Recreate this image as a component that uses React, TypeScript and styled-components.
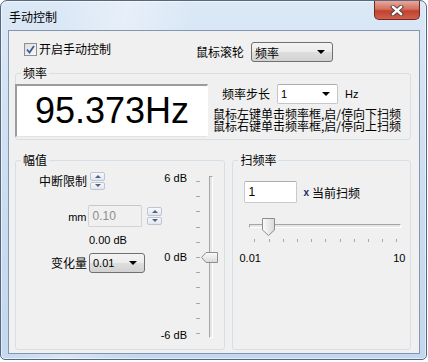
import React from "react";
import styled, { createGlobalStyle } from "styled-components";

const cjk = `"Noto Sans CJK SC", "Liberation Sans", sans-serif`;
const latin = `"Liberation Sans", Arial, sans-serif`;

const GlobalStyle = createGlobalStyle`
  html, body { margin: 0; padding: 0; background: #ffffff; }
  body { font-family: ${cjk}; font-size: 12px; color: #000; }
`;

const Window = styled.div`
  width: 427px;
  height: 360px;
  box-sizing: border-box;
  border: 1px solid #55687f;
  border-radius: 7px 7px 5px 5px;
  background: linear-gradient(100deg, rgba(255, 255, 255, 0) 12%, rgba(255, 255, 255, 0.35) 26%, rgba(255, 255, 255, 0) 40%),
    linear-gradient(180deg, #dbe8f6 0%, #cadcf0 60%, #c3d7ee 100%);
  box-shadow: inset 0 0 0 1px rgba(255, 255, 255, 0.55);
  display: flex;
  flex-direction: column;
`;

const TitleBar = styled.div`
  height: 29px;
  display: flex;
  align-items: flex-start;
  justify-content: space-between;
`;

const Title = styled.div`
  margin: 8px 0 0 8px;
  line-height: 16px;
`;

const CloseButton = styled.div`
  width: 46px;
  height: 19px;
  margin-right: 6px;
  box-sizing: border-box;
  border: 1px solid #6e2a22;
  border-top: none;
  border-radius: 0 0 5px 5px;
  background: linear-gradient(180deg, #e9a99b 0%, #d4705f 45%, #c2412f 55%, #d0604c 100%);
  display: flex;
  align-items: center;
  justify-content: center;
`;

const Client = styled.div`
  flex: 1;
  margin: 0 6px 5px 7px;
  border: 1px solid #8396ae;
  background: #f0f0f0;
  display: flex;
  flex-direction: column;
`;

const TopRow = styled.div`
  display: flex;
  align-items: flex-start;
  margin-top: 11px;
  padding-left: 15px;
  height: 20px;
`;

const CheckLabel = styled.label`
  display: flex;
  align-items: center;
  gap: 2px;
  width: 172px;
  height: 14px;
  line-height: 14px;
`;

const CheckBox = styled.span`
  width: 13px;
  height: 13px;
  box-sizing: border-box;
  border: 1px solid #8e8f8f;
  background: linear-gradient(135deg, #dcdcdc, #fbfbfb);
  display: flex;
  align-items: center;
  justify-content: center;
`;

const Label = styled.span<{ $width?: number }>`
  display: inline-block;
  line-height: 20px;
  white-space: nowrap;
  ${(p) => (p.$width ? `width: ${p.$width}px; text-align: right;` : "")}
`;

const Combo = styled.div<{ $width: number; $flat?: boolean }>`
  width: ${(p) => p.$width}px;
  height: 20px;
  box-sizing: border-box;
  border: 1px solid ${(p) => (p.$flat ? "#c3c6cc" : "#707070")};
  border-top-color: ${(p) => (p.$flat ? "#abadb3" : "#707070")};
  border-radius: ${(p) => (p.$flat ? "2px" : "3px")};
  background: ${(p) =>
    p.$flat ? "#ffffff" : "linear-gradient(180deg, #f4f4f4 0%, #ececec 48%, #dedede 52%, #d2d2d2 100%)"};
  display: flex;
  align-items: center;
  justify-content: space-between;
  padding: 0 7px 0 3px;
  font-family: ${(p) => (p.$latin ? latin : cjk)};
  font-size: ${(p) => (p.$latin ? "11px" : "12px")};
` as any;

const Arrow = styled.span`
  width: 0;
  height: 0;
  border-left: 4px solid transparent;
  border-right: 4px solid transparent;
  border-top: 4px solid #000;
`;

const Group = styled.fieldset<{ $width?: number; $height?: number }>`
  margin: 0;
  padding: 0;
  min-width: 0;
  border: 1px solid #d5dfe5;
  border-radius: 3px;
  box-sizing: border-box;
  ${(p) => (p.$width ? `width: ${p.$width}px;` : "")}
  ${(p) => (p.$height ? `height: ${p.$height}px;` : "")}
`;

const Legend = styled.legend`
  margin-left: 5px;
  padding: 0 2px;
  line-height: 16px;
`;

const FreqGroup = styled(Group)`
  margin: 3px 8px 0 6px;
`;

const FreqBody = styled.div`
  display: flex;
  padding: 3px 0 2px 0;
`;

const Display = styled.div`
  width: 193px;
  height: 53px;
  box-sizing: border-box;
  margin-left: -1px;
  border-style: solid;
  border-width: 2px 1px 1px 2px;
  border-color: #9c9c9c #ffffff #e3e3e3 #9c9c9c;
  background: #ffffff;
  display: flex;
  align-items: center;
  justify-content: center;
  font-family: ${latin};
  font-size: 36px;
`;

const FreqSide = styled.div`
  margin-left: 5px;
  display: flex;
  flex-direction: column;
`;

const StepRow = styled.div`
  display: flex;
  align-items: center;
  height: 20px;
  margin-left: 9px;
  gap: 7px;
`;

const Unit = styled.span`
  font-family: ${latin};
  font-size: 11px;
`;

const Hint = styled.div`
  margin-top: 4px;
  line-height: 12px;
  white-space: nowrap;
`;

const BottomRow = styled.div`
  display: flex;
  gap: 7px;
  margin: 12px 8px 0 6px;
`;

const AmpBody = styled.div`
  display: flex;
  align-items: flex-start;
`;

const Controls = styled.div`
  width: 146px;
  margin-top: 4px;
  display: flex;
  flex-direction: column;
`;

const CtrlRow = styled.div<{ $h: number; $gap?: number }>`
  display: flex;
  align-items: center;
  height: ${(p) => p.$h}px;
  margin-top: ${(p) => p.$gap || 0}px;
`;

const SmallText = styled.span<{ $ml?: number; $color?: string }>`
  font-family: ${latin};
  font-size: 11px;
  line-height: 14px;
  margin-left: ${(p) => p.$ml || 0}px;
  color: ${(p) => p.$color || "#000"};
`;

const Spin = styled.div<{ $ml: number }>`
  margin-left: ${(p) => p.$ml}px;
  width: 15px;
  height: 18px;
  display: flex;
  flex-direction: column;
  gap: 1px;
`;

const SpinHalf = styled.div`
  flex: 1;
  box-sizing: border-box;
  border: 1px solid #bcc5d1;
  border-radius: 2px;
  background: linear-gradient(180deg, #f8f9fb, #e2e6ec);
  display: flex;
  align-items: center;
  justify-content: center;
`;

const SpinArrow = styled.span<{ $down?: boolean }>`
  width: 0;
  height: 0;
  border-left: 3px solid transparent;
  border-right: 3px solid transparent;
  ${(p) => (p.$down ? "border-top: 3px solid #4e6287;" : "border-bottom: 3px solid #4e6287;")}
`;

const TextBox = styled.div<{ $width: number; $disabled?: boolean; $ml?: number }>`
  width: ${(p) => p.$width}px;
  height: 22px;
  box-sizing: border-box;
  margin-left: ${(p) => p.$ml || 0}px;
  border: 1px solid ${(p) => (p.$disabled ? "#d3d3d3" : "#c5c9d0")};
  border-top-color: ${(p) => (p.$disabled ? "#c8c8c8" : "#abadb3")};
  border-radius: 2px;
  background: ${(p) => (p.$disabled ? "#f0f0f0" : "#ffffff")};
  color: ${(p) => (p.$disabled ? "#8d8d8d" : "#000")};
  padding-left: 3px;
  display: flex;
  align-items: center;
  font-family: ${latin};
  font-size: 12px;
`;

const ScaleLabels = styled.div`
  width: 25px;
  height: 171px;
  margin-top: 3px;
  display: flex;
  flex-direction: column;
  justify-content: space-between;
  align-items: flex-end;
  font-family: ${latin};
  font-size: 11px;
  line-height: 14px;
  white-space: nowrap;
`;

const VTicks = styled.div`
  width: 4px;
  height: 153px;
  margin: 13px 0 0 9px;
  display: flex;
  flex-direction: column;
  justify-content: space-between;
`;

const VTick = styled.span`
  height: 1px;
  background: #a8a8a8;
`;

const VTrack = styled.div`
  position: relative;
  width: 4px;
  height: 162px;
  box-sizing: border-box;
  margin: 8px 0 0 9px;
  border-style: solid;
  border-width: 1px;
  border-color: #a5a5a5 #ffffff #ffffff #a5a5a5;
  background: #e6e6e6;
`;

const VThumb = styled.svg`
  position: absolute;
  right: -6px;
  top: 75px;
`;

const SweepBody = styled.div`
  display: flex;
  flex-direction: column;
`;

const SweepRow = styled.div`
  display: flex;
  align-items: center;
  margin: 13px 0 0 11px;
`;

const Times = styled.span`
  margin-left: 6px;
  margin-right: 3px;
  font-family: ${latin};
  font-size: 10px;
  font-weight: bold;
  color: #1d2b5e;
`;

const HSlider = styled.div`
  position: relative;
  width: 152px;
  margin: 15px 0 0 16px;
  padding-top: 6px;
`;

const HTrack = styled.div`
  height: 4px;
  box-sizing: border-box;
  border-style: solid;
  border-width: 1px;
  border-color: #a5a5a5 #ffffff #ffffff #a5a5a5;
  background: #e6e6e6;
`;

const HThumb = styled.svg`
  position: absolute;
  left: 13px;
  top: 0;
`;

const HTicks = styled.div`
  width: 143px;
  height: 3px;
  margin: 11px 0 0 21px;
  display: flex;
  justify-content: space-between;
`;

const HTick = styled.span`
  width: 1px;
  background: #a8a8a8;
`;

const RangeRow = styled.div`
  width: 166px;
  margin: 9px 0 0 6px;
  display: flex;
  justify-content: space-between;
  font-family: ${latin};
  font-size: 11px;
  line-height: 14px;
`;

const ticks = Array.from({ length: 11 }, (_, i) => i);

const SpinBox = ({ ml }: { ml: number }) => (
  <Spin $ml={ml}>
    <SpinHalf>
      <SpinArrow />
    </SpinHalf>
    <SpinHalf>
      <SpinArrow $down />
    </SpinHalf>
  </Spin>
);

const App: React.FC = () => {
  return (
    <>
      <GlobalStyle />
      <Window>
        <TitleBar>
          <Title>手动控制</Title>
          <CloseButton>
            <svg width="14" height="11" viewBox="0 0 14 11">
              <path d="M3 2 L11 9 M11 2 L3 9" stroke="#4b3a3a" strokeWidth="4.2" strokeLinecap="square" />
              <path d="M3 2 L11 9 M11 2 L3 9" stroke="#ffffff" strokeWidth="2.4" strokeLinecap="square" />
            </svg>
          </CloseButton>
        </TitleBar>
        <Client>
          <TopRow>
            <CheckLabel>
              <CheckBox>
                <svg width="9" height="9" viewBox="0 0 9 9">
                  <path d="M1 4.5 L3.5 7.5 L8 1" fill="none" stroke="#3d5a9e" strokeWidth="1.8" />
                </svg>
              </CheckBox>
              开启手动控制
            </CheckLabel>
            <Label style={{ marginRight: 7 }}>鼠标滚轮</Label>
            <Combo $width={82}>
              <span>频率</span>
              <Arrow />
            </Combo>
          </TopRow>

          <FreqGroup>
            <Legend>频率</Legend>
            <FreqBody>
              <Display>95.373Hz</Display>
              <FreqSide>
                <StepRow>
                  <Label>频率步长</Label>
                  <Combo $width={61} $flat $latin>
                    <span>1</span>
                    <Arrow />
                  </Combo>
                  <Unit>Hz</Unit>
                </StepRow>
                <Hint>
                  鼠标左键单击频率框,启/停向下扫频
                  <br />
                  鼠标右键单击频率框,启/停向上扫频
                </Hint>
              </FreqSide>
            </FreqBody>
          </FreqGroup>

          <BottomRow>
            <Group $width={211} $height={198}>
              <Legend>幅值</Legend>
              <AmpBody>
                <Controls>
                  <CtrlRow $h={18}>
                    <Label $width={71}>中断限制</Label>
                    <SpinBox ml={3} />
                  </CtrlRow>
                  <CtrlRow $h={22} $gap={15}>
                    <Label $width={71}>
                      <SmallText>mm</SmallText>
                    </Label>
                    <TextBox $width={54} $ml={2} $disabled>
                      0.10
                    </TextBox>
                    <SpinBox ml={5} />
                  </CtrlRow>
                  <CtrlRow $h={14} $gap={6}>
                    <SmallText $ml={73}>0.00 dB</SmallText>
                  </CtrlRow>
                  <CtrlRow $h={20} $gap={6}>
                    <Label $width={71}>变化量</Label>
                    <Combo $width={56} $latin style={{ marginLeft: 2 }}>
                      <span>0.01</span>
                      <Arrow />
                    </Combo>
                  </CtrlRow>
                </Controls>
                <ScaleLabels>
                  <span>6 dB</span>
                  <span>0 dB</span>
                  <span>-6 dB</span>
                </ScaleLabels>
                <VTicks>
                  {ticks.map((t) => (
                    <VTick key={t} />
                  ))}
                </VTicks>
                <VTrack>
                  <VThumb width="17" height="11" viewBox="0 0 17 11">
                    <defs>
                      <linearGradient id="vthumb" x1="0" y1="0" x2="0" y2="1">
                        <stop offset="0" stopColor="#fbfbfb" />
                        <stop offset="1" stopColor="#d9d9d9" />
                      </linearGradient>
                    </defs>
                    <path d="M0.5 5.5 L5 0.5 H16.5 V10.5 H5 Z" fill="url(#vthumb)" stroke="#8d8d8d" />
                  </VThumb>
                </VTrack>
              </AmpBody>
            </Group>

            <Group $width={179} $height={198}>
              <Legend>扫频率</Legend>
              <SweepBody>
                <SweepRow>
                  <TextBox $width={53}>1</TextBox>
                  <Times>x</Times>
                  <span>当前扫频</span>
                </SweepRow>
                <HSlider>
                  <HTrack />
                  <HThumb width="13" height="18" viewBox="0 0 13 18">
                    <defs>
                      <linearGradient id="hthumb" x1="0" y1="0" x2="1" y2="0">
                        <stop offset="0" stopColor="#fbfbfb" />
                        <stop offset="1" stopColor="#d9d9d9" />
                      </linearGradient>
                    </defs>
                    <path d="M0.5 0.5 H12.5 V12 L6.5 17.5 L0.5 12 Z" fill="url(#hthumb)" stroke="#8d8d8d" />
                  </HThumb>
                </HSlider>
                <HTicks>
                  {ticks.map((t) => (
                    <HTick key={t} />
                  ))}
                </HTicks>
                <RangeRow>
                  <span>0.01</span>
                  <span>10</span>
                </RangeRow>
              </SweepBody>
            </Group>
          </BottomRow>
        </Client>
      </Window>
    </>
  );
};

export default App;
